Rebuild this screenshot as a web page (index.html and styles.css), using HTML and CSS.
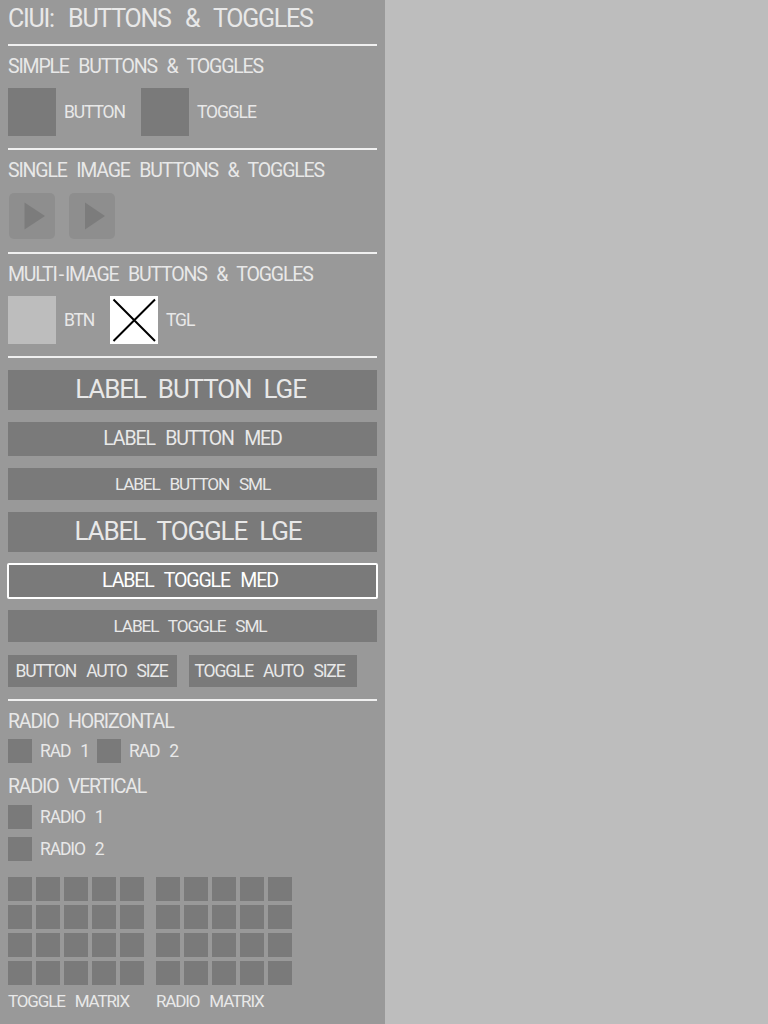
FILE: index.html
```html
<!DOCTYPE html>
<html lang="en">
<head>
    <meta charset="UTF-8">
    <meta name="viewport" content="width=device-width, initial-scale=1.0">
    <title>CIUI: Buttons &amp; Toggles</title>
    <link rel="stylesheet" href="styles.css">
</head>
<body>
    <div class="panel">
        <h1 class="panel-title">CIUI: BUTTONS &amp; TOGGLES</h1>

        <!-- Simple -->
        <hr class="divider">
        <h2 class="section-label">SIMPLE BUTTONS &amp; TOGGLES</h2>
        <div class="widget-row">
            <div class="square"></div>
            <span class="widget-text text-button">BUTTON</span>
            <div class="square"></div>
            <span class="widget-text">TOGGLE</span>
        </div>

        <!-- Single image -->
        <hr class="divider">
        <h2 class="section-label">SINGLE IMAGE BUTTONS &amp; TOGGLES</h2>
        <div class="widget-row image-row">
            <div class="image-btn">
                <svg width="46" height="46" viewBox="0 0 46 46"><polygon points="15.5,9.5 36,23 15.5,36.5"/></svg>
            </div>
            <div class="image-btn">
                <svg width="46" height="46" viewBox="0 0 46 46"><polygon points="16,9.5 36,23 16,36.5"/></svg>
            </div>
        </div>

        <!-- Multi image -->
        <hr class="divider">
        <h2 class="section-label">MULTI<span class="hyphen">-</span>IMAGE BUTTONS &amp; TOGGLES</h2>
        <div class="widget-row">
            <div class="square square-light"></div>
            <span class="widget-text text-btn">BTN</span>
            <div class="square square-cross">
                <svg width="48" height="48" viewBox="0 0 48 48"><path d="M3.5 3.5L45 45M45 3.5L3.5 45"/></svg>
            </div>
            <span class="widget-text">TGL</span>
        </div>

        <!-- Label buttons -->
        <hr class="divider divider-labels">
        <div class="label-btn label-lge">LABEL BUTTON LGE</div>
        <div class="label-btn label-med">LABEL BUTTON MED</div>
        <div class="label-btn label-sml">LABEL BUTTON SML</div>
        <div class="label-btn label-lge label-toggle">LABEL TOGGLE LGE</div>
        <div class="label-btn label-med label-toggle label-active">LABEL TOGGLE MED</div>
        <div class="label-btn label-sml label-toggle">LABEL TOGGLE SML</div>
        <div class="auto-row">
            <div class="auto-btn auto-button">BUTTON AUTO SIZE</div>
            <div class="auto-btn auto-toggle">TOGGLE AUTO SIZE</div>
        </div>

        <!-- Radios -->
        <hr class="divider">
        <h2 class="section-label radio-h-label">RADIO HORIZONTAL</h2>
        <div class="radio-row">
            <div class="cell"></div>
            <span class="radio-text rad-first">RAD 1</span>
            <div class="cell"></div>
            <span class="radio-text">RAD 2</span>
        </div>
        <h2 class="section-label radio-v-label">RADIO VERTICAL</h2>
        <div class="radio-row radio-stack">
            <div class="cell"></div>
            <span class="radio-text">RADIO 1</span>
        </div>
        <div class="radio-row">
            <div class="cell"></div>
            <span class="radio-text">RADIO 2</span>
        </div>

        <!-- Matrices -->
        <div class="matrix-row">
            <div class="matrix-block">
                <div class="matrix">
                    <div class="cell"></div><div class="cell"></div><div class="cell"></div><div class="cell"></div><div class="cell"></div>
                    <div class="cell"></div><div class="cell"></div><div class="cell"></div><div class="cell"></div><div class="cell"></div>
                    <div class="cell"></div><div class="cell"></div><div class="cell"></div><div class="cell"></div><div class="cell"></div>
                    <div class="cell"></div><div class="cell"></div><div class="cell"></div><div class="cell"></div><div class="cell"></div>
                </div>
                <div class="matrix-label">TOGGLE MATRIX</div>
            </div>
            <div class="matrix-block">
                <div class="matrix">
                    <div class="cell"></div><div class="cell"></div><div class="cell"></div><div class="cell"></div><div class="cell"></div>
                    <div class="cell"></div><div class="cell"></div><div class="cell"></div><div class="cell"></div><div class="cell"></div>
                    <div class="cell"></div><div class="cell"></div><div class="cell"></div><div class="cell"></div><div class="cell"></div>
                    <div class="cell"></div><div class="cell"></div><div class="cell"></div><div class="cell"></div><div class="cell"></div>
                </div>
                <div class="matrix-label">RADIO MATRIX</div>
            </div>
        </div>
    </div>
</body>
</html>
```

FILE: styles.css
```css
* {
    margin: 0;
    padding: 0;
    box-sizing: border-box;
    font-family: "Roboto", "Liberation Sans", sans-serif;
    font-weight: normal;
}

html, body {
    height: 100%;
    overflow: hidden;
}

body {
    background-color: #bdbdbd;
    color: #e8e8e8;
    letter-spacing: -0.07em;
    word-spacing: 0.42em;
}

.panel {
    width: 385px;
    height: 1024px;
    padding: 0 8px;
    background-color: #999999;
}

.panel-title {
    height: 36px;
    margin-bottom: 8px;
    font-size: 25px;
    line-height: 38px;
    letter-spacing: -0.05em;
    word-spacing: 0.37em;
}

.divider {
    height: 2px;
    margin-bottom: 8px;
    border: none;
    background-color: #f0f0f0;
}

.divider-labels {
    margin-bottom: 12px;
}

.section-label {
    height: 24px;
    margin-bottom: 10px;
    font-size: 19.5px;
    line-height: 26px;
    letter-spacing: -0.06em;
    word-spacing: 0.3em;
}

.hyphen {
    padding: 0 2px;
}

.widget-row {
    display: flex;
    align-items: center;
    height: 48px;
    margin-bottom: 12px;
}

.square {
    flex-shrink: 0;
    width: 48px;
    height: 48px;
    background-color: #7a7a7a;
}

.square-light {
    background-color: #bdbdbd;
}

.square-cross {
    background-color: #ffffff;
}

.square-cross svg {
    display: block;
}

.square-cross path {
    fill: none;
    stroke: #000000;
    stroke-width: 2;
}

.widget-text {
    margin-left: 8px;
    font-size: 17.5px;
}

.text-button {
    width: 77px;
}

.text-btn {
    width: 46px;
}

.image-row {
    gap: 14px;
    padding-left: 1px;
}

.image-btn {
    width: 46px;
    height: 46px;
    border-radius: 5px;
    background-color: #8e8e8e;
}

.image-btn svg {
    display: block;
}

.image-btn polygon {
    fill: #7c7c7c;
}

.label-btn {
    margin-bottom: 12px;
    background-color: #7a7a7a;
    text-align: center;
}

.label-lge {
    height: 40px;
    padding-right: 4px;
    font-size: 26px;
    line-height: 38px;
}

.label-med {
    height: 34px;
    font-size: 19.5px;
    line-height: 33px;
}

.label-sml {
    height: 32px;
    font-size: 17.2px;
    line-height: 32px;
}

.label-toggle {
    padding-right: 5px;
}

.label-lge.label-toggle {
    padding-right: 9px;
}

.label-active {
    color: #ffffff;
    outline: 2px solid #ffffff;
    outline-offset: -1px;
    border-radius: 1px;
}

.auto-row {
    display: flex;
    gap: 12px;
    margin-top: 13px;
    margin-bottom: 12px;
}

.auto-btn {
    height: 32px;
    background-color: #7a7a7a;
    font-size: 17.5px;
    line-height: 32px;
    text-align: center;
    white-space: nowrap;
}

.auto-button {
    width: 169px;
    padding-right: 2px;
}

.auto-toggle {
    width: 168px;
    padding-right: 7px;
}

.radio-h-label {
    margin-bottom: 6px;
}

.radio-v-label {
    margin-top: 11px;
    margin-bottom: 7px;
}

.radio-row {
    display: flex;
    align-items: center;
    height: 24px;
}

.radio-stack {
    margin-bottom: 8px;
}

.radio-text {
    margin-left: 8px;
    font-size: 17.5px;
}

.rad-first {
    width: 57px;
}

.cell {
    width: 24px;
    height: 24px;
    background-color: #7a7a7a;
}

.matrix-row {
    display: flex;
    gap: 12px;
    margin-top: 16px;
}

.matrix-block {
    width: 136px;
}

.matrix {
    display: grid;
    grid-template-columns: repeat(5, 24px);
    gap: 4px;
}

.matrix-label {
    margin-top: 4px;
    font-size: 17px;
    line-height: 24px;
    white-space: nowrap;
}
```
